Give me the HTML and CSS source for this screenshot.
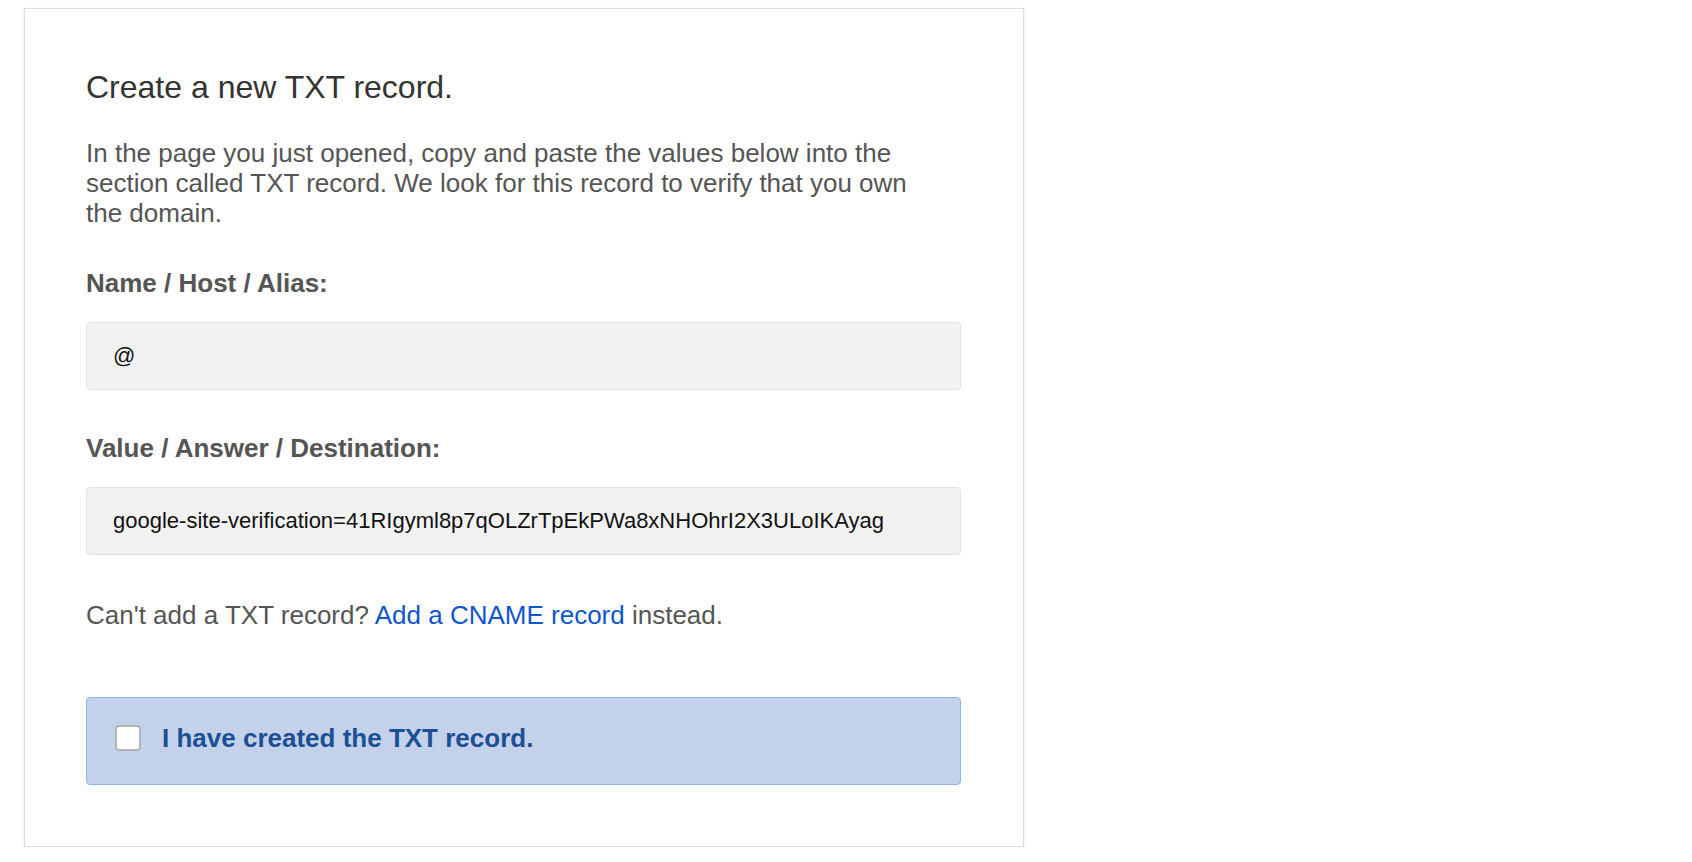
FILE: index.html
```html
<!DOCTYPE html>
<html lang="en">
<head>
    <meta charset="UTF-8">
    <title>Create a new TXT record</title>
    <link rel="stylesheet" href="styles.css">
</head>
<body>
    <div class="card">
        <h2 class="title">Create a new TXT record.</h2>
        <p class="intro">In the page you just opened, copy and paste the values below into the section called TXT record. We look for this record to verify that you own the domain.</p>

        <div class="field first">
            <label class="field-label" for="host">Name / Host / Alias:</label>
            <input class="field-value" id="host" type="text" value="@" readonly>
        </div>

        <div class="field">
            <label class="field-label" for="answer">Value / Answer / Destination:</label>
            <input class="field-value" id="answer" type="text" value="google-site-verification=41RIgyml8p7qOLZrTpEkPWa8xNHOhrI2X3ULoIKAyag" readonly>
        </div>

        <p class="alt">Can't add a TXT record? <a href="#">Add a CNAME record</a> instead.</p>

        <label class="confirm">
            <input type="checkbox" class="confirm-box">
            <span>I have created the TXT record.</span>
        </label>
    </div>
</body>
</html>
```

FILE: styles.css
```css
body {
    margin: 0;
    padding: 8px 0 0 24px;
    font-family: "Liberation Sans", Arial, sans-serif;
    background: #fff;
}

.card {
    width: 1000px;
    box-sizing: border-box;
    padding: 59px 62px 61px 61px;
    border: 1px solid #dcdcd8;
    box-shadow: 0 1px 3px rgba(0, 0, 0, 0.12);
    background: #fff;
}

.title {
    margin: 0;
    font-size: 32px;
    line-height: 38px;
    font-weight: normal;
    color: #333;
}

.intro {
    max-width: 845px;
    margin: 32px 0 0;
    font-size: 26px;
    line-height: 30px;
    color: #555;
}

.field {
    margin-top: 44px;
}

.field.first {
    margin-top: 41px;
}

.field-label {
    display: block;
    font-size: 26px;
    line-height: 28px;
    font-weight: bold;
    color: #555;
}

.field-value {
    display: block;
    width: 100%;
    height: 68px;
    box-sizing: border-box;
    margin-top: 25px;
    padding: 0 26px;
    border: 1px solid #e2e2e2;
    border-radius: 4px;
    background: #f2f2f2;
    font-family: "Liberation Sans", Arial, sans-serif;
    font-size: 22px;
    color: #111;
    outline: none;
}

.alt {
    margin: 46px 0 0;
    font-size: 26px;
    line-height: 28px;
    color: #555;
}

.alt a {
    color: #1155cc;
    text-decoration: none;
}

.confirm {
    display: flex;
    align-items: center;
    gap: 21px;
    height: 88px;
    box-sizing: border-box;
    margin-top: 68px;
    padding: 0 0 6px 28px;
    border: 1px solid #8db7ee;
    border-radius: 4px;
    background: #c3d2ea;
    font-size: 26px;
    font-weight: bold;
    color: #1c4f94;
    cursor: pointer;
}

.confirm-box {
    appearance: none;
    -webkit-appearance: none;
    width: 26px;
    height: 26px;
    margin: 0;
    box-sizing: border-box;
    border: 2px solid #b4b4b4;
    border-radius: 4px;
    background: #fff;
}
```
